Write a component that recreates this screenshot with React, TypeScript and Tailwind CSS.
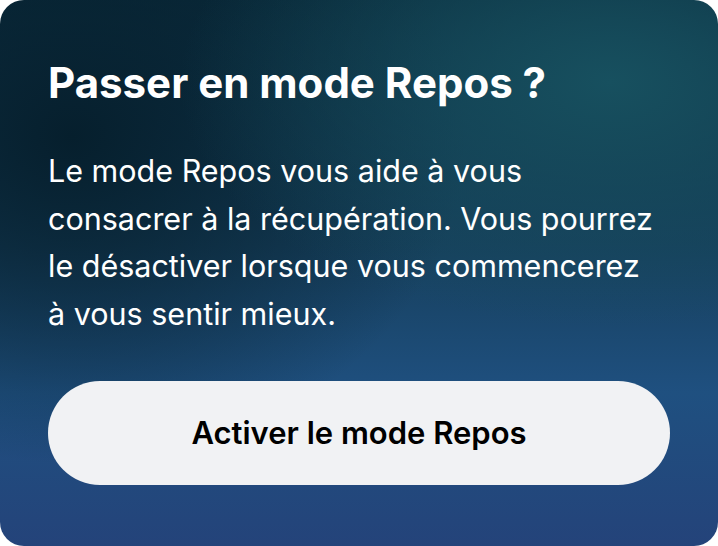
export default function App() {
  return (
    <div className="w-[718px] h-[546px] bg-white" style={{ fontFamily: 'Inter, "Noto Sans", sans-serif' }}>
      <div className="w-full h-full rounded-[24px] overflow-hidden bg-[radial-gradient(ellipse_60%_45%_at_85%_15%,#17505f_0%,transparent_100%),radial-gradient(ellipse_55%_60%_at_10%_25%,#061f2d_0%,transparent_100%),linear-gradient(to_bottom,#0a2c3d_0%,#163f5c_45%,#1f5080_72%,#24437a_100%)] px-[48px] pt-[59px] flex flex-col">
        <h1 className="text-white font-bold text-[42px] leading-[48px]">
          Passer en mode Repos ?
        </h1>
        <p className="mt-[40px] text-white text-[30.5px] leading-[47.5px] w-[610px]">
          Le mode Repos vous aide à vous consacrer à la récupération. Vous pourrez le désactiver lorsque vous commencerez à vous sentir mieux.
        </p>
        <button
          type="button"
          className="mt-[44px] w-[622px] h-[104px] shrink-0 rounded-full bg-[#f1f2f4] text-black font-semibold text-[31px]"
        >
          Activer le mode Repos
        </button>
      </div>
    </div>
  )
}
